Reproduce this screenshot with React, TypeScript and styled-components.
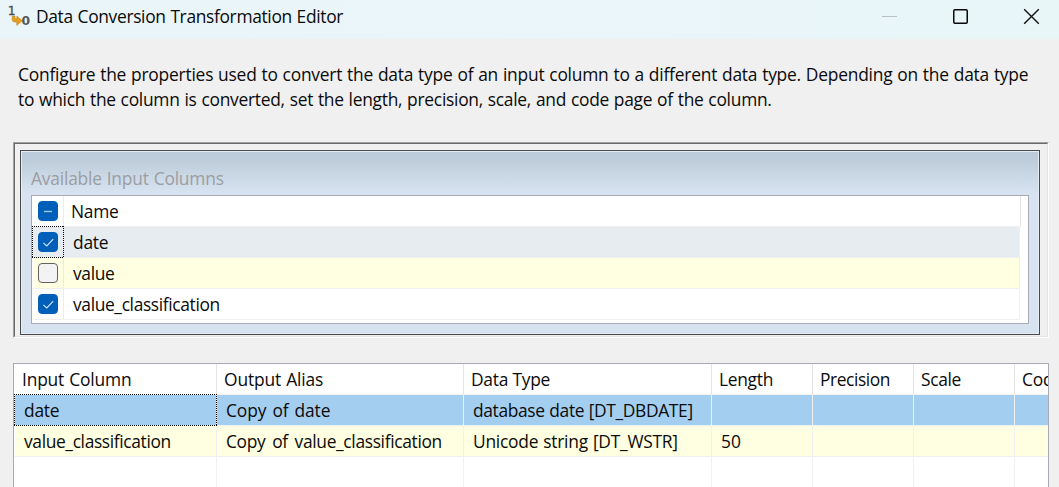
import React from "react";
import styled, { createGlobalStyle, css } from "styled-components";

const GlobalStyle = createGlobalStyle`
  * { box-sizing: border-box; }
  body {
    margin: 0;
    overflow: hidden;
    background: #f0f0f0;
    color: #0b0b0b;
    font: 17.4px/25px "Open Sans", "Noto Sans", sans-serif;
  }
`;

const Dialog = styled.main`
  width: 1059px;
  height: 487px;
  overflow: hidden;
`;

const TitleBar = styled.header`
  display: flex;
  align-items: center;
  height: 39px;
  padding: 0 19px 6px 8px;
  background: linear-gradient(to right, #eaf5fa, #e9f6f8);
`;

const Title = styled.h1`
  flex: 1;
  margin: 0 0 0 6px;
  font-size: 17.4px;
  font-weight: 400;
  line-height: 25px;
`;

const IconFrame = styled.div`
  flex: none;
  width: 22px;
  height: 25px;

  svg { display: block; }
`;

const WindowButtons = styled.div`
  display: flex;
  gap: 54px;
`;

const Text = styled.span<{ $track?: number; $gap?: number }>`
  white-space: pre;
  letter-spacing: ${(p) => p.$track ?? 0}px;
  word-spacing: ${(p) => p.$gap ?? 0}px;
`;

const Description = styled.p`
  display: flex;
  flex-direction: column;
  align-items: flex-start;
  height: 103px;
  margin: 0;
  padding: 23px 0 0 18px;
`;

const SunkenFrame = styled.section`
  width: 1036px;
  height: 196px;
  margin-left: 13px;
  border: 1px solid;
  border-color: #a0a0a0 #fff #fff #a0a0a0;
`;

const SunkenInner = styled.div`
  height: 100%;
  padding: 6px 7px 1px 5px;
  border: 1px solid;
  border-color: #696969 #e3e3e3 #e3e3e3 #696969;
`;

const GroupPanel = styled.div`
  height: 185px;
  padding: 15px 9px 0;
  border: 1px solid #4b4b4b;
  box-shadow: inset 0 0 0 1px #e3ebf4;
  background: linear-gradient(#bccbda 0, #bfcddb 10px, #d7e3f1 42px);
`;

const GroupTitle = styled.h2`
  height: 29px;
  margin: 0 0 0 1px;
  font-size: 17.4px;
  font-weight: 400;
  line-height: 25px;
  color: #9b9ea3;
`;

const List = styled.div`
  height: 129px;
  width: 998px;
  margin-left: 1px;
  border: 1px solid #a7abb3;
  background: #fff;
`;

type Tone = "white" | "hover" | "yellow" | "selected";
const tones: Record<Tone, string> = {
  white: "#fff",
  hover: "#e7ecf1",
  yellow: "#ffffe1",
  selected: "#a4cef0",
};

const ListRow = styled.div<{ $tone: Tone; $header?: boolean }>`
  display: flex;
  width: ${(p) => (p.$header ? 989 : 988)}px;
  height: 31px;
  border-left: 1px solid #fff;
  border-right: 1px solid ${(p) => (p.$header ? "#e5e5e5" : "#f0f0f0")};
  border-bottom: 1px solid #f0f0f0;
  background: ${(p) => tones[p.$tone]};
`;

const focusRing = css`
  &::after {
    content: "";
    position: absolute;
    inset: -1px;
    background:
      repeating-linear-gradient(to right, #000 0 1px, transparent 1px 2px) top / 100% 1px no-repeat,
      repeating-linear-gradient(to right, #000 0 1px, transparent 1px 2px) bottom / 100% 1px no-repeat,
      repeating-linear-gradient(to bottom, #000 0 1px, transparent 1px 2px) left / 1px 100% no-repeat,
      repeating-linear-gradient(to bottom, #000 0 1px, transparent 1px 2px) right / 1px 100% no-repeat;
  }
`;

const CheckCell = styled.div<{ $focused?: boolean }>`
  position: relative;
  width: 31px;
  height: 30px;
  padding: 5px;
  border-right: 1px solid #ebebeb;
  ${(p) => p.$focused && focusRing}
`;

const NameCell = styled.div<{ $header?: boolean }>`
  padding: 3px 0 0 ${(p) => (p.$header ? 7 : 9)}px;
`;

const Box = styled.div<{ $filled: boolean }>`
  display: flex;
  width: 20px;
  height: 20px;
  border: 1px solid ${(p) => (p.$filled ? "#005fb8" : "#626262")};
  border-radius: 4px;
  background: ${(p) => (p.$filled ? "#005fb8" : "#f3f3f3")};
`;

const Grid = styled.section`
  width: 1036px;
  height: 130px;
  margin: 25px 0 0 13px;
  overflow: hidden;
  border: 1px solid #a7abb3;
  border-bottom: 0;
  background: #fff;
`;

const GridRow = styled.div<{ $tone: Tone; $header?: boolean }>`
  display: grid;
  grid-template-columns: 203px 247px 248px 101px 101px 101px 33px;
  height: 31px;
  background: ${(p) => tones[p.$tone]};
`;

const GridCell = styled.div<{ $header?: boolean; $focused?: boolean }>`
  position: relative;
  min-width: 0;
  padding: 3px 0 0 ${(p) => (p.$header ? 7 : 9)}px;
  border-right: 1px solid ${(p) => (p.$header ? "#e5e5e5" : "#f0f0f0")};
  border-bottom: 1px solid #f0f0f0;
  white-space: nowrap;

  &:first-child {
    border-left: 1px solid #fff;
  }
  &:last-child {
    border-right: 0;
    overflow: hidden;
  }
  ${(p) => p.$focused && focusRing}
`;

type CheckState = "mixed" | "checked" | "empty";

function Checkbox({ state }: { state: CheckState }) {
  return (
    <Box $filled={state !== "empty"}>
      {state !== "empty" && (
        <svg width="18" height="18" viewBox="0 0 18 18" fill="none">
          {state === "mixed" ? (
            <path d="M5 9.5h8" stroke="#9fc5e8" strokeWidth="1.4" />
          ) : (
            <path d="M4.4 9.8 7.8 13l6.4-6.8" stroke="#d6e6f5" strokeWidth="1.1" />
          )}
        </svg>
      )}
    </Box>
  );
}

function ConversionIcon() {
  return (
    <IconFrame>
      <svg width="22" height="25" viewBox="0 0 22 25">
        <text x="-0.2" y="11" fontFamily="DejaVu Sans" fontSize="12.3" fill="#484b4d" stroke="#484b4d" strokeWidth="0.3">1</text>
        <path d="M4.2 12v3.6q0 2.4 2.2 2.4h2.4v3.4l5.4-4.7-5.4-4.6v3H7V12z" fill="#e5a11b" stroke="#bc8319" strokeWidth=".6" />
        <text x="13.4" y="21.4" fontFamily="DejaVu Sans" fontWeight="700" fontSize="13" textLength="8.6" lengthAdjust="spacingAndGlyphs" fill="#55585a">0</text>
      </svg>
    </IconFrame>
  );
}

interface Item { name: string; state: CheckState; tone: Tone; track: number; focused?: boolean }
const inputs: Item[] = [
  { name: "date", state: "checked", tone: "hover", track: -0.25, focused: true },
  { name: "value", state: "empty", tone: "yellow", track: -0.35 },
  { name: "value_classification", state: "checked", tone: "white", track: -0.36 },
];

interface Label { text: string; track: number; gap: number }
const label = (text: string, track = 0, gap = 0): Label => ({ text, track, gap });
const blanks = (count: number) => Array.from({ length: count }, () => label(""));
const headings = [
  label("Input Column", -0.18, 0.8), label("Output Alias", -0.15, 0.8), label("Data Type", -0.25),
  label("Length", -0.3), label("Precision", -0.42), label("Scale", -0.35), label("Code Page", -0.2),
];
const rows: { tone: Tone; focused?: boolean; cells: Label[] }[] = [
  {
    tone: "selected",
    focused: true,
    cells: [label("date", -0.25), label("Copy of date", -0.1, 1.6), label("database date [DT_DBDATE]", -0.36, 0.5), ...blanks(4)],
  },
  {
    tone: "yellow",
    cells: [label("value_classification", -0.36), label("Copy of value_classification", -0.34, 2.6), label("Unicode string [DT_WSTR]", -0.25, 0.8), label("50"), ...blanks(3)],
  },
  { tone: "white", cells: blanks(7) },
];

export default function App() {
  return (
    <Dialog>
      <GlobalStyle />
      <TitleBar>
        <ConversionIcon />
        <Title><Text $track={-0.34} $gap={0.6}>Data Conversion Transformation Editor</Text></Title>
        <WindowButtons>
          <svg width="17" height="17" viewBox="0 0 17 17"><path d="M1 8.5h15" stroke="#b9c0c3" /></svg>
          <svg width="17" height="17" viewBox="0 0 17 17"><rect x="1.75" y="1.75" width="13.5" height="13.5" rx="1.2" fill="none" stroke="#080808" strokeWidth="1.5" /></svg>
          <svg width="17" height="17" viewBox="0 0 17 17"><path d="M1.2 1.2l14.6 14.6M15.8 1.2L1.2 15.8" stroke="#111" strokeWidth="1.4" /></svg>
        </WindowButtons>
      </TitleBar>
      <Description>
        <Text $track={-0.22} $gap={0.58}>Configure the properties used to convert the data type of an input column to a different data type. Depending on the data type</Text>
        <Text $track={-0.27} $gap={0.58}>to which the column is converted, set the length, precision, scale, and code page of the column.</Text>
      </Description>
      <SunkenFrame>
        <SunkenInner>
          <GroupPanel>
            <GroupTitle><Text $track={-0.2} $gap={0.6}>Available Input Columns</Text></GroupTitle>
            <List>
              <ListRow $tone="white" $header>
                <CheckCell><Checkbox state="mixed" /></CheckCell>
                <NameCell $header><Text $track={-0.25}>Name</Text></NameCell>
              </ListRow>
              {inputs.map((item) => (
                <ListRow key={item.name} $tone={item.tone}>
                  <CheckCell $focused={item.focused}><Checkbox state={item.state} /></CheckCell>
                  <NameCell><Text $track={item.track}>{item.name}</Text></NameCell>
                </ListRow>
              ))}
            </List>
          </GroupPanel>
        </SunkenInner>
      </SunkenFrame>
      <Grid>
        <GridRow $tone="white" $header>
          {headings.map((h) => (
            <GridCell key={h.text} $header><Text $track={h.track} $gap={h.gap}>{h.text}</Text></GridCell>
          ))}
        </GridRow>
        {rows.map((row, r) => (
          <GridRow key={r} $tone={row.tone}>
            {row.cells.map((c, i) => (
              <GridCell key={i} $focused={row.focused && i === 0}>
                <Text $track={c.track} $gap={c.gap}>{c.text}</Text>
              </GridCell>
            ))}
          </GridRow>
        ))}
      </Grid>
    </Dialog>
  );
}
